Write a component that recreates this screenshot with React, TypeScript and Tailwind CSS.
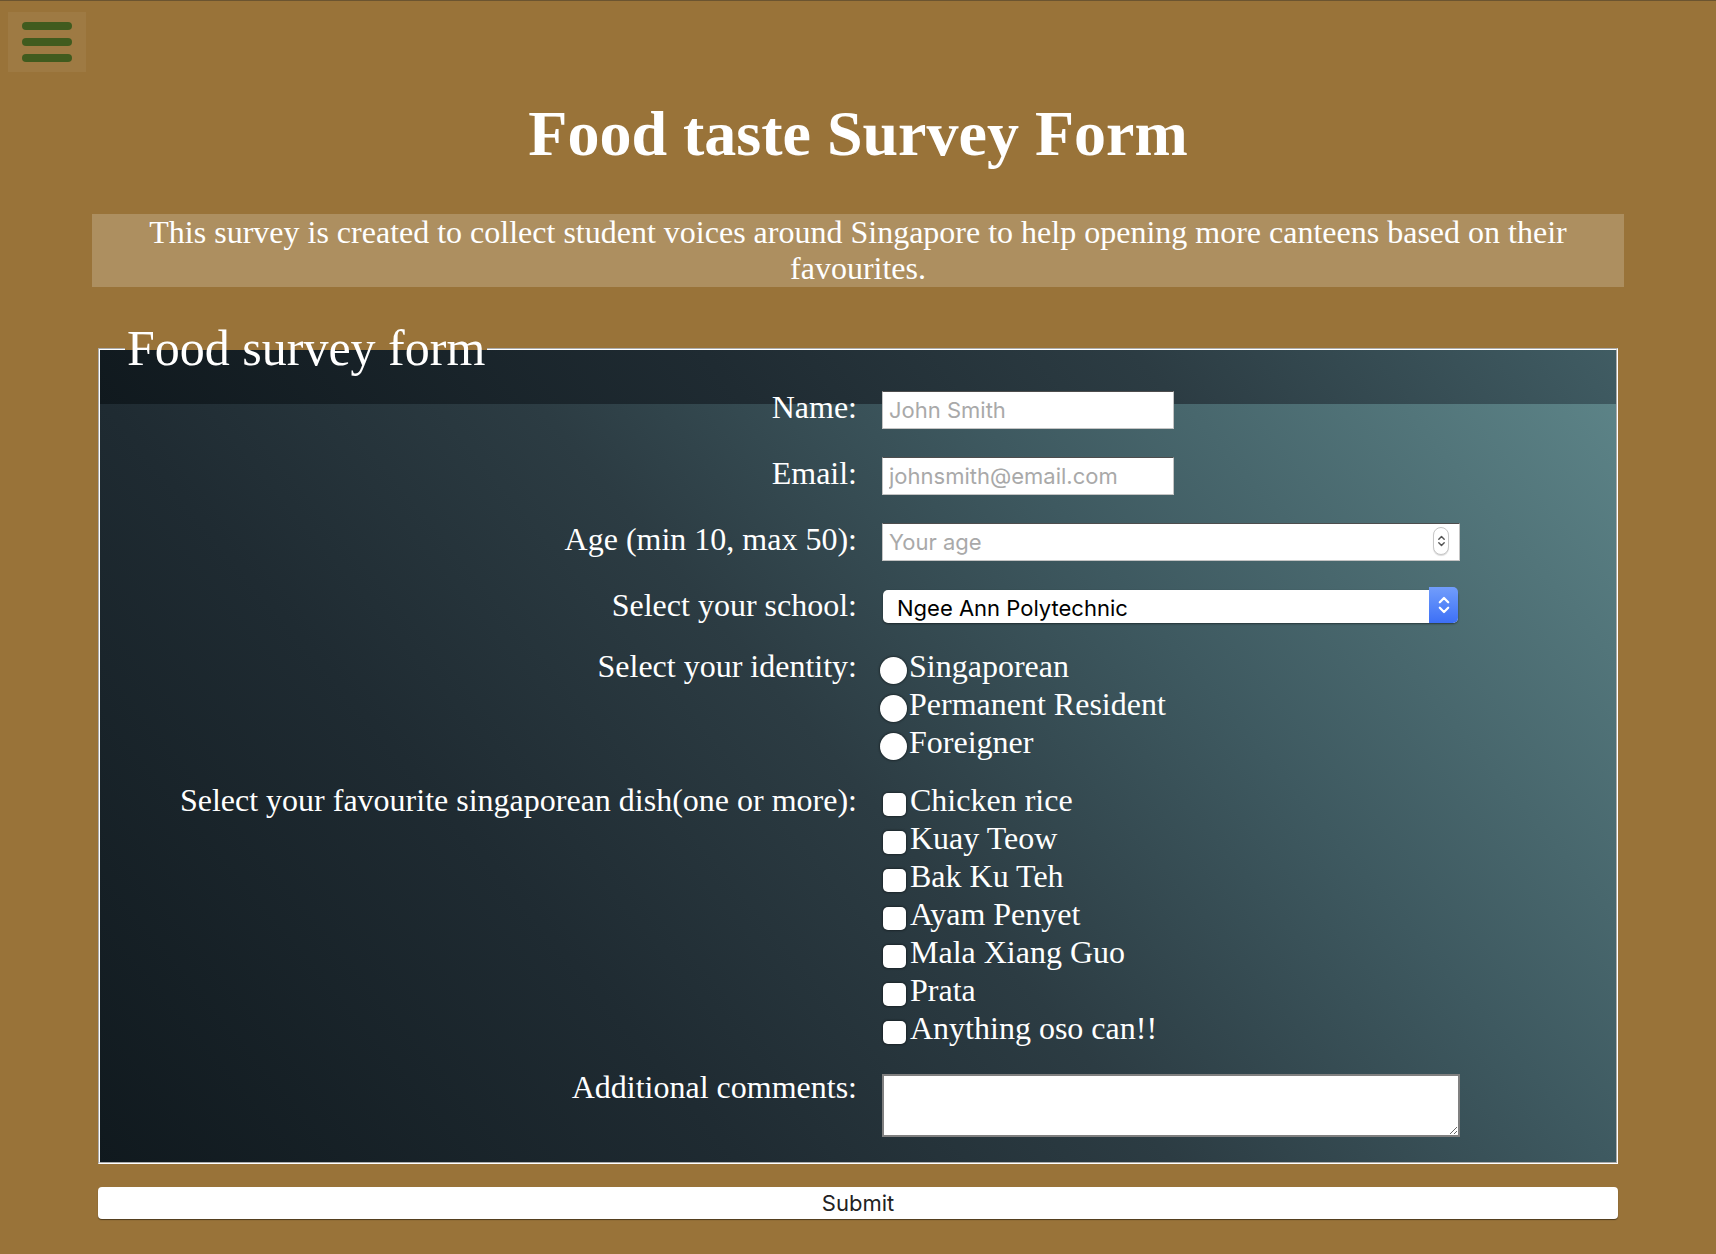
import { useState } from 'react';

const sans = "font-['Inter','Liberation_Sans',sans-serif]";

const schools = [
  'Ngee Ann Polytechnic',
  'Singapore Polytechnic',
  'Temasek Polytechnic',
  'Nanyang Polytechnic',
  'Republic Polytechnic',
];

const identities = ['Singaporean', 'Permanent Resident', 'Foreigner'];

const dishes = [
  'Chicken rice',
  'Kuay Teow',
  'Bak Ku Teh',
  'Ayam Penyet',
  'Mala Xiang Guo',
  'Prata',
  'Anything oso can!!',
];

interface RowProps {
  label: string;
  htmlFor?: string;
  className?: string;
  children: React.ReactNode;
}

function Row({ label, htmlFor, className = '', children }: RowProps) {
  return (
    <div className={`grid grid-cols-2 items-baseline ${className}`}>
      <label htmlFor={htmlFor} className="pr-[1px] text-right">
        {label}
      </label>
      <div className="pl-[24px]">{children}</div>
    </div>
  );
}

function Chevrons({ className = '' }: { className?: string }) {
  return (
    <svg viewBox="0 0 10 16" className={className} fill="none" stroke="currentColor" strokeWidth="1.6" strokeLinecap="round" strokeLinejoin="round">
      <path d="M2 6l3-3 3 3" />
      <path d="M2 10l3 3 3-3" />
    </svg>
  );
}

export default function App() {
  const [identity, setIdentity] = useState('');
  const [picked, setPicked] = useState<string[]>([]);

  const toggleDish = (dish: string) => {
    setPicked((prev) => (prev.includes(dish) ? prev.filter((d) => d !== dish) : [...prev, dish]));
  };

  return (
    <div className="min-h-screen border-t border-[#6b5430] bg-[#997339] pb-[35px] font-['Liberation_Serif','Times_New_Roman',serif] text-white">
      {/* Menu toggle */}
      <button type="button" className="ml-[8px] mt-[11px] flex h-[60px] w-[78px] flex-col items-center justify-center gap-[8px] bg-white/5">
        <span className="h-[8px] w-[50px] rounded-full bg-[#405b1e]" />
        <span className="h-[8px] w-[50px] rounded-full bg-[#405b1e]" />
        <span className="h-[8px] w-[50px] rounded-full bg-[#405b1e]" />
      </button>

      <h1 className="mt-[25px] text-center text-[64px] font-bold leading-[73.5px]">Food taste Survey Form</h1>

      <p className="mx-auto mt-[43px] w-[1532px] bg-white/20 text-center text-[32px] leading-[36.8px]">
        This survey is created to collect student voices around Singapore to help opening more canteens based on their
        favourites.
      </p>

      <form className="mx-auto mt-[33px] w-[1532px]" onSubmit={(e) => e.preventDefault()}>
        <fieldset className="mx-[6px] border-2 border-white bg-[linear-gradient(50deg,#10191e_0%,#1f2b32_30%,#2c3c43_50%,#3e5960_70%,#5c8387_100%)] bg-[length:100%_764px] bg-[position:0px_56px] bg-repeat-y bg-origin-border px-[25px] pb-[25px] pt-[11px] text-[32px] leading-[36.8px] [border-style:groove]">
          <legend className="px-[2px] text-[50px] leading-[57.5px]">Food survey form</legend>

          <Row label="Name:" htmlFor="name">
            <input
              id="name"
              type="text"
              placeholder="John Smith"
              className={`h-[38px] w-[292px] border border-[#c4c4c4] border-t-[#4d4d4d] bg-white px-[6px] text-[22px] text-black placeholder:text-[#a9a9a9] ${sans}`}
            />
          </Row>

          <Row label="Email:" htmlFor="email" className="mt-[26px]">
            <input
              id="email"
              type="email"
              placeholder="johnsmith@email.com"
              className={`h-[38px] w-[292px] border border-[#c4c4c4] border-t-[#4d4d4d] bg-white px-[6px] text-[22px] text-black placeholder:text-[#a9a9a9] ${sans}`}
            />
          </Row>

          <Row label="Age (min 10, max 50):" htmlFor="age" className="mt-[26px]">
            <div className="relative w-[578px]">
              <input
                id="age"
                type="number"
                min={10}
                max={50}
                placeholder="Your age"
                className={`h-[38px] w-full border border-[#c4c4c4] border-t-[#4d4d4d] bg-white px-[6px] text-[22px] text-black placeholder:text-[#a9a9a9] [appearance:textfield] [&::-webkit-inner-spin-button]:appearance-none ${sans}`}
              />
              <span className="pointer-events-none absolute right-[11px] top-1/2 flex h-[28px] w-[16px] -translate-y-1/2 items-center justify-center rounded-full border border-[#c8c8c8] bg-white text-[#555] shadow-[0_1px_1px_rgba(0,0,0,0.15)]">
                <Chevrons className="h-[18px] w-[9px]" />
              </span>
            </div>
          </Row>

          <Row label="Select your school:" htmlFor="school" className="mt-[26px]">
            <div className="relative ml-[1px] w-[575px]">
              <select
                id="school"
                defaultValue={schools[0]}
                className={`h-[33px] w-full appearance-none rounded-[5px] bg-white pl-[14px] text-[22px] text-black shadow-[0_1px_2px_rgba(0,0,0,0.45)] ${sans}`}
              >
                {schools.map((s) => (
                  <option key={s}>{s}</option>
                ))}
              </select>
              <span className="pointer-events-none absolute right-0 top-0 flex h-full w-[29px] items-center justify-center rounded-r-[5px] bg-gradient-to-b from-[#729dfb] to-[#3d6ff6] text-white">
                <Chevrons className="h-[24px] w-[14px]" />
              </span>
            </div>
          </Row>

          <Row label="Select your identity:" className="mt-[24px]">
            {identities.map((id) => (
              <label key={id} className="block leading-[38px]">
                <input
                  type="radio"
                  name="identity"
                  value={id}
                  checked={identity === id}
                  onChange={() => setIdentity(id)}
                  className="mr-[2px] ml-[-2px] inline-block h-[27px] w-[27px] appearance-none rounded-full bg-white align-middle shadow-[0_0_2px_1px_rgba(0,0,0,0.35)] checked:border-[7px] checked:border-[#3d6ff6]"
                />
                {id}
              </label>
            ))}
          </Row>

          <Row label="Select your favourite singaporean dish(one or more):" className="mt-[20px]">
            {dishes.map((dish) => (
              <label key={dish} className="block leading-[38px]">
                <input
                  type="checkbox"
                  value={dish}
                  checked={picked.includes(dish)}
                  onChange={() => toggleDish(dish)}
                  className="ml-[1px] mr-[4px] inline-block h-[23px] w-[23px] appearance-none rounded-[5px] bg-white align-middle shadow-[0_0_2px_1px_rgba(0,0,0,0.35)] checked:bg-[#3d6ff6]"
                />
                {dish}
              </label>
            ))}
          </Row>

          <Row label="Additional comments:" htmlFor="comments" className="mt-[22px]">
            <textarea
              id="comments"
              className={`block h-[63px] w-[578px] border-2 border-[#808080] bg-white p-[2px] text-[22px] leading-[24px] text-black ${sans}`}
            />
          </Row>
        </fieldset>

        <button
          type="submit"
          className={`mx-[6px] mt-[23px] block h-[32px] w-[calc(100%-12px)] rounded-[4px] bg-white text-[22px] text-[#222] shadow-[0_1px_1px_rgba(0,0,0,0.5)] ${sans}`}
        >
          Submit
        </button>
      </form>
    </div>
  );
}
